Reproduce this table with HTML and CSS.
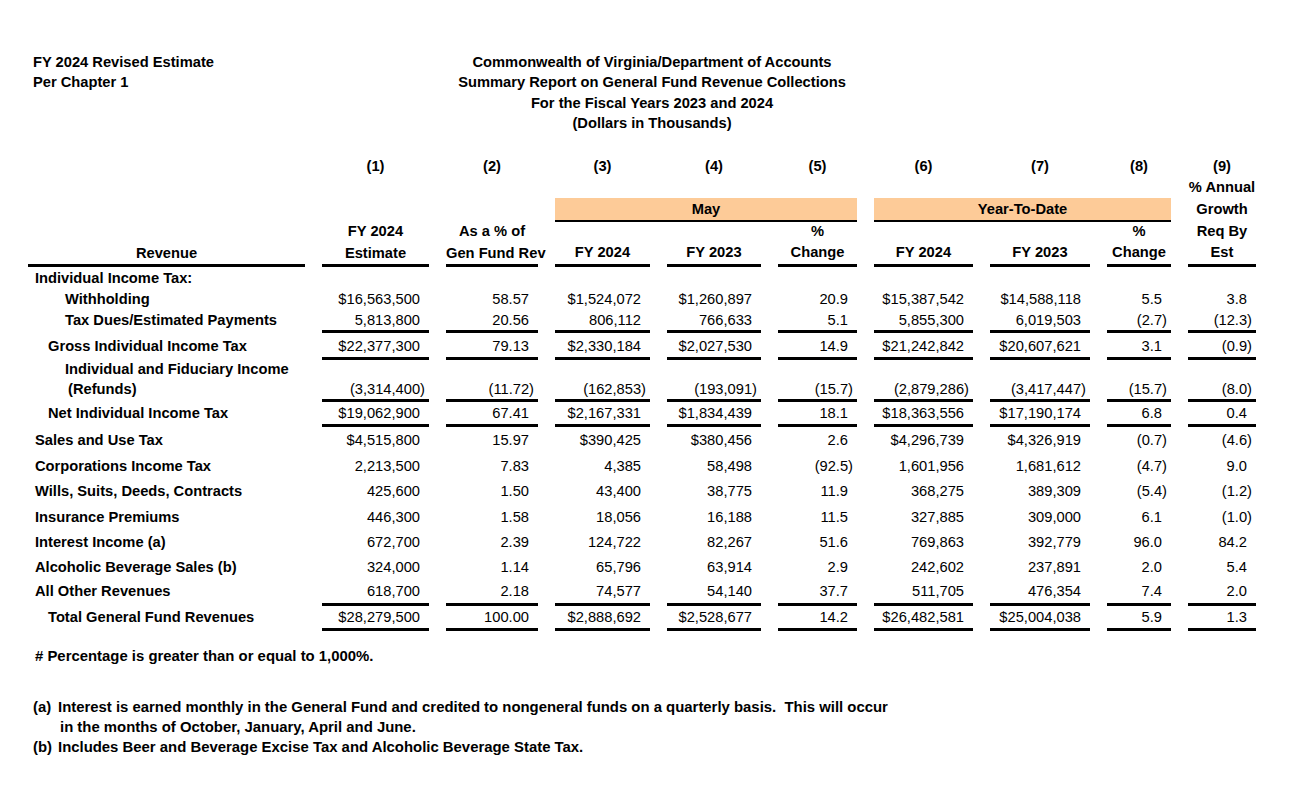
FILE: index.html
```html
<!DOCTYPE html>
<html lang="en">
<head>
<meta charset="utf-8">
<title>Summary Report on General Fund Revenue Collections</title>
<link rel="stylesheet" href="styles.css">
</head>
<body>
<div class="page">
  <header class="top">
    <div class="left-head">
      <div>FY 2024 Revised Estimate</div>
      <div>Per Chapter 1</div>
    </div>
    <div class="title">
      <div>Commonwealth of Virginia/Department of Accounts</div>
      <div>Summary Report on General Fund Revenue Collections</div>
      <div>For the Fiscal Years 2023 and 2024</div>
      <div>(Dollars in Thousands)</div>
    </div>
  </header>

  <table class="report">
    <colgroup>
      <col class="c-lbl"><col class="c1"><col class="c2"><col class="c3"><col class="c4"><col class="c5"><col class="c6"><col class="c7"><col class="c8"><col class="c9">
    </colgroup>
    <thead>
      <tr class="h-num">
        <th>&nbsp;</th><th>(1)</th><th>(2)</th><th>(3)</th><th>(4)</th><th>(5)</th><th>(6)</th><th>(7)</th><th>(8)</th><th>(9)</th>
      </tr>
      <tr class="h-r2">
        <th rowspan="4" class="hs ul">Revenue</th>
        <th rowspan="4" class="hs ul">FY 2024<br>Estimate</th>
        <th rowspan="4" class="hs ul">As a % of<br>Gen Fund Rev</th>
        <th>&nbsp;</th><th>&nbsp;</th><th>&nbsp;</th><th>&nbsp;</th><th>&nbsp;</th><th>&nbsp;</th>
        <th rowspan="4" class="hs ul growth">% Annual<br>Growth<br>Req By<br>Est</th>
      </tr>
      <tr class="h-band">
        <th colspan="3" class="band">May</th>
        <th colspan="3" class="band">Year-To-Date</th>
      </tr>
      <tr class="h-r4">
        <th>&nbsp;</th><th>&nbsp;</th><th>%</th><th>&nbsp;</th><th>&nbsp;</th><th>%</th>
      </tr>
      <tr class="h-r5">
        <th class="ul">FY 2024</th><th class="ul">FY 2023</th><th class="ul">Change</th><th class="ul">FY 2024</th><th class="ul">FY 2023</th><th class="ul">Change</th>
      </tr>
    </thead>
    <tbody>
      <tr class="r-sec">
        <td class="lbl l0">Individual Income Tax:</td>
        <td>&nbsp;</td><td></td><td></td><td></td><td></td><td></td><td></td><td></td><td></td>
      </tr>
      <tr class="r-with">
        <td class="lbl l2">Withholding</td>
        <td class="n">$16,563,500</td><td class="n">58.57</td><td class="n">$1,524,072</td><td class="n">$1,260,897</td><td class="n">20.9</td><td class="n">$15,387,542</td><td class="n">$14,588,118</td><td class="n">5.5</td><td class="n">3.8</td>
      </tr>
      <tr class="r-due u">
        <td class="lbl l2">Tax Dues/Estimated Payments</td>
        <td class="n">5,813,800</td><td class="n">20.56</td><td class="n">806,112</td><td class="n">766,633</td><td class="n">5.1</td><td class="n">5,855,300</td><td class="n">6,019,503</td><td class="n ng">(2.7)</td><td class="n ng">(12.3)</td>
      </tr>
      <tr class="r-gross u">
        <td class="lbl l1">Gross Individual Income Tax</td>
        <td class="n">$22,377,300</td><td class="n">79.13</td><td class="n">$2,330,184</td><td class="n">$2,027,530</td><td class="n">14.9</td><td class="n">$21,242,842</td><td class="n">$20,607,621</td><td class="n">3.1</td><td class="n ng">(0.9)</td>
      </tr>
      <tr class="r-ref u">
        <td class="lbl l2">Individual and Fiduciary Income<br><span class="cont">(Refunds)</span></td>
        <td class="n ng">(3,314,400)</td><td class="n ng">(11.72)</td><td class="n ng">(162,853)</td><td class="n ng">(193,091)</td><td class="n ng">(15.7)</td><td class="n ng">(2,879,286)</td><td class="n ng">(3,417,447)</td><td class="n ng">(15.7)</td><td class="n ng">(8.0)</td>
      </tr>
      <tr class="r-net u">
        <td class="lbl l1">Net Individual Income Tax</td>
        <td class="n">$19,062,900</td><td class="n">67.41</td><td class="n">$2,167,331</td><td class="n">$1,834,439</td><td class="n">18.1</td><td class="n">$18,363,556</td><td class="n">$17,190,174</td><td class="n">6.8</td><td class="n">0.4</td>
      </tr>
      <tr class="r-sales">
        <td class="lbl l0">Sales and Use Tax</td>
        <td class="n">$4,515,800</td><td class="n">15.97</td><td class="n">$390,425</td><td class="n">$380,456</td><td class="n">2.6</td><td class="n">$4,296,739</td><td class="n">$4,326,919</td><td class="n ng">(0.7)</td><td class="n ng">(4.6)</td>
      </tr>
      <tr class="r-one">
        <td class="lbl l0">Corporations Income Tax</td>
        <td class="n">2,213,500</td><td class="n">7.83</td><td class="n">4,385</td><td class="n">58,498</td><td class="n ng">(92.5)</td><td class="n">1,601,956</td><td class="n">1,681,612</td><td class="n ng">(4.7)</td><td class="n">9.0</td>
      </tr>
      <tr class="r-one">
        <td class="lbl l0">Wills, Suits, Deeds, Contracts</td>
        <td class="n">425,600</td><td class="n">1.50</td><td class="n">43,400</td><td class="n">38,775</td><td class="n">11.9</td><td class="n">368,275</td><td class="n">389,309</td><td class="n ng">(5.4)</td><td class="n ng">(1.2)</td>
      </tr>
      <tr class="r-one">
        <td class="lbl l0">Insurance Premiums</td>
        <td class="n">446,300</td><td class="n">1.58</td><td class="n">18,056</td><td class="n">16,188</td><td class="n">11.5</td><td class="n">327,885</td><td class="n">309,000</td><td class="n">6.1</td><td class="n ng">(1.0)</td>
      </tr>
      <tr class="r-one">
        <td class="lbl l0">Interest Income (a)</td>
        <td class="n">672,700</td><td class="n">2.39</td><td class="n">124,722</td><td class="n">82,267</td><td class="n">51.6</td><td class="n">769,863</td><td class="n">392,779</td><td class="n">96.0</td><td class="n">84.2</td>
      </tr>
      <tr class="r-one">
        <td class="lbl l0">Alcoholic Beverage Sales (b)</td>
        <td class="n">324,000</td><td class="n">1.14</td><td class="n">65,796</td><td class="n">63,914</td><td class="n">2.9</td><td class="n">242,602</td><td class="n">237,891</td><td class="n">2.0</td><td class="n">5.4</td>
      </tr>
      <tr class="r-other u">
        <td class="lbl l0">All Other Revenues</td>
        <td class="n">618,700</td><td class="n">2.18</td><td class="n">74,577</td><td class="n">54,140</td><td class="n">37.7</td><td class="n">511,705</td><td class="n">476,354</td><td class="n">7.4</td><td class="n">2.0</td>
      </tr>
      <tr class="r-total u">
        <td class="lbl l1">Total General Fund Revenues</td>
        <td class="n">$28,279,500</td><td class="n">100.00</td><td class="n">$2,888,692</td><td class="n">$2,528,677</td><td class="n">14.2</td><td class="n">$26,482,581</td><td class="n">$25,004,038</td><td class="n">5.9</td><td class="n">1.3</td>
      </tr>
    </tbody>
  </table>

  <div class="notes">
    <p class="pct"># Percentage is greater than or equal to 1,000%.</p>
    <div class="fns">
      <div class="fn"><span class="mk">(a)</span><span class="tx">Interest is earned monthly in the General Fund and credited to nongeneral funds on a quarterly basis.&nbsp; This will occur<br><span class="cont2">in the months of October, January, April and June.</span></span></div>
      <div class="fn"><span class="mk">(b)</span><span class="tx">Includes Beer and Beverage Excise Tax and Alcoholic Beverage State Tax.</span></div>
    </div>
  </div>
</div>
</body>
</html>
```

FILE: styles.css
```css
html, body {
  margin: 0;
  padding: 0;
  background: #ffffff;
}

body {
  font-family: "Liberation Sans", Arial, sans-serif;
  font-size: 14.7px;
  color: #000;
}

.page {
  width: 1316px;
  height: 802px;
  overflow: hidden;
}

/* ---------- header ---------- */
.top {
  display: flex;
  padding: 52px 0 0 33px;
  font-weight: bold;
  line-height: 20.3px;
}

.left-head {
  width: 300px;
}

.title {
  width: 638px;
  text-align: center;
}

/* ---------- table ---------- */
.report {
  table-layout: fixed;
  border-collapse: separate;
  border-spacing: 17px 0;
  width: 1262px;
  margin: 22px 0 0 11px;
}

.c-lbl { width: 277px; }
.c1 { width: 107px; }
.c2 { width: 92px; }
.c3 { width: 95px; }
.c4 { width: 94px; }
.c5 { width: 79px; }
.c6 { width: 99px; }
.c7 { width: 100px; }
.c8 { width: 64px; }
.c9 { width: 68px; }

.report th,
.report td {
  padding: 0;
  white-space: nowrap;
}

.report th {
  font-weight: bold;
  text-align: center;
  vertical-align: middle;
}

.h-num th { line-height: 22px; }
.h-r2 th { line-height: 21px; }
.h-r4 th { line-height: 19px; }
.h-r5 th { line-height: 23px; }

.report th.hs {
  line-height: 22px;
  vertical-align: bottom;
}

.report th.growth {
  line-height: 21.75px;
}

.report th.ul {
  border-bottom: 3px solid #000;
}

.report th.band {
  background: #fdcb98;
  border-bottom: 2px solid #000;
  line-height: 22px;
}

.report td {
  vertical-align: top;
}

.report td.lbl {
  font-weight: bold;
  text-align: left;
}

.u td.lbl {
  padding-bottom: 3px;
}

.l0 { padding-left: 7px !important; }
.l1 { padding-left: 20px !important; }
.l2 { padding-left: 37px !important; }

.cont {
  padding-left: 3px;
}

.report td.n {
  text-align: right;
  padding-right: 9px;
}

.report td.n.ng {
  padding-right: 4px;
}

.u td.n {
  border-bottom: 3px solid #000;
}

.r-sec td { line-height: 22px; }
.r-with td { line-height: 21px; }
.r-due td { line-height: 20px; }
.r-gross td { line-height: 21px; padding-top: 3px; }
.r-ref td { line-height: 19.5px; }
.r-ref td.n { vertical-align: bottom; }
.r-net td { line-height: 22px; }
.r-sales td { line-height: 27px; }
.r-one td { line-height: 25.2px; }
.r-other td { line-height: 23px; }
.r-total td { line-height: 22px; }

/* ---------- notes ---------- */
.notes {
  font-weight: bold;
  font-size: 14.9px;
  line-height: 20px;
  padding-left: 33px;
}

.pct {
  margin: 15px 0 0 2px;
}

.fns {
  margin-top: 31px;
}

.fn {
  display: flex;
}

.mk {
  width: 25px;
  flex: none;
}

.cont2 {
  padding-left: 2px;
}
```
